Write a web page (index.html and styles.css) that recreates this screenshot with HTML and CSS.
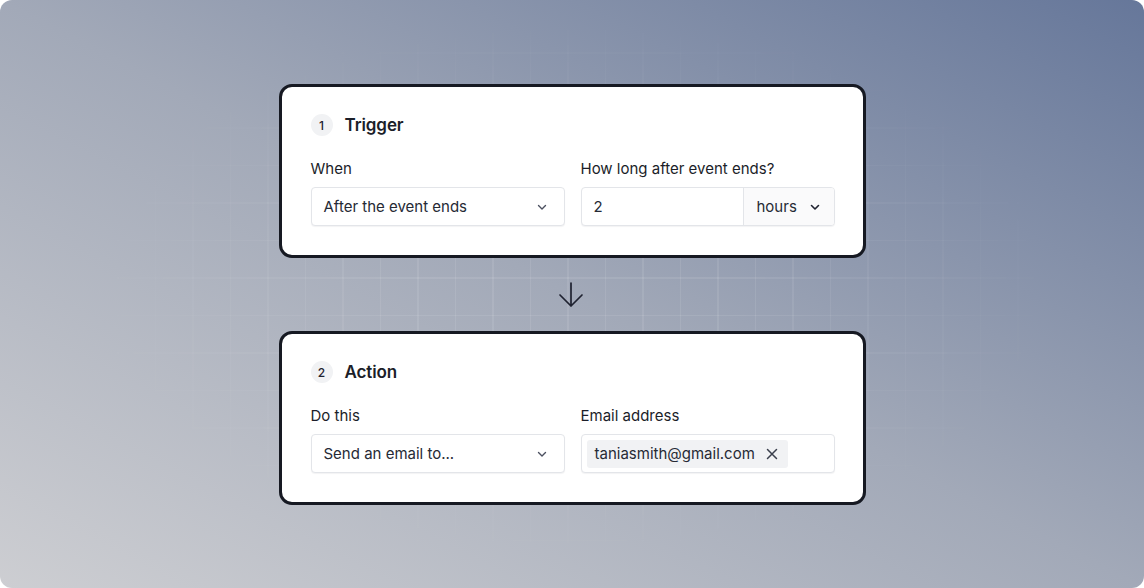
FILE: index.html
```html
<!DOCTYPE html>
<html>
<head>
<meta charset="utf-8">
<link rel="stylesheet" href="styles.css">
</head>
<body>
<div class="frame">
  <div class="grid"></div>
  <div class="flow">
    <section class="card">
      <div class="card-head"><span class="badge">1</span><h2 class="title">Trigger</h2></div>
      <div class="fields">
        <div class="field">
          <div class="label">When</div>
          <div class="control select">
            <span class="value">After the event ends</span>
            <svg class="chev" width="12" height="12" viewBox="0 0 12 12"><path d="M2.5 4.5L6 8l3.5-3.5" fill="none" stroke="#4b5060" stroke-width="1.4" stroke-linecap="round" stroke-linejoin="round"/></svg>
          </div>
        </div>
        <div class="field">
          <div class="label">How long after event ends?</div>
          <div class="control split">
            <span class="value num">2</span>
            <span class="unit">hours
              <svg class="chev" width="12" height="12" viewBox="0 0 12 12"><path d="M2.5 4.5L6 8l3.5-3.5" fill="none" stroke="#1f2230" stroke-width="1.6" stroke-linecap="round" stroke-linejoin="round"/></svg>
            </span>
          </div>
        </div>
      </div>
    </section>
    <div class="arrow">
      <svg width="28" height="26" viewBox="0 0 28 26"><path d="M14 1v23M3 13l11 11 11-11" fill="none" stroke="#1f2230" stroke-width="1.7" stroke-linecap="round" stroke-linejoin="round"/></svg>
    </div>
    <section class="card">
      <div class="card-head"><span class="badge">2</span><h2 class="title">Action</h2></div>
      <div class="fields">
        <div class="field">
          <div class="label">Do this</div>
          <div class="control select">
            <span class="value">Send an email to...</span>
            <svg class="chev" width="12" height="12" viewBox="0 0 12 12"><path d="M2.5 4.5L6 8l3.5-3.5" fill="none" stroke="#4b5060" stroke-width="1.4" stroke-linecap="round" stroke-linejoin="round"/></svg>
          </div>
        </div>
        <div class="field">
          <div class="label">Email address</div>
          <div class="control tags">
            <span class="chip">taniasmith@gmail.com
              <svg width="12" height="12" viewBox="0 0 12 12"><path d="M1.5 1.5l9 9M10.5 1.5l-9 9" fill="none" stroke="#3a3f4c" stroke-width="1.5" stroke-linecap="round"/></svg>
            </span>
          </div>
        </div>
      </div>
    </section>
  </div>
</div>
</body>
</html>
```
FILE: styles.css
```css
* { box-sizing: border-box; }
html, body { margin: 0; padding: 0; background: #ffffff; }
body { width: 1144px; height: 588px; overflow: hidden; font-family: Inter, "Noto Sans", sans-serif; }

.frame {
  position: relative;
  width: 1144px;
  height: 588px;
  border-radius: 12px;
  overflow: hidden;
  background: linear-gradient(to top right, #cdced2 0%, #a2a9b8 50%, #66779a 100%);
  display: flex;
  align-items: center;
  justify-content: center;
}

.grid {
  position: absolute;
  inset: 0;
  background-image:
    repeating-linear-gradient(to right, rgba(255,255,255,0.09) 0 1px, transparent 1px 37.5px),
    repeating-linear-gradient(to bottom, rgba(255,255,255,0.09) 0 1px, transparent 1px 37.5px);
  background-position: 5px 15px;
  -webkit-mask-image: radial-gradient(ellipse 500px 280px at 570px 290px, #000 35%, transparent 100%);
  mask-image: radial-gradient(ellipse 500px 280px at 570px 290px, #000 35%, transparent 100%);
}

.flow {
  position: relative;
  display: flex;
  flex-direction: column;
  align-items: center;
  margin-top: 1px;
}

.card {
  width: 587px;
  background: #ffffff;
  border: 3px solid #161922;
  border-radius: 13px;
  padding: 27px 28px 29px 29px;
}

.card-head {
  display: flex;
  align-items: center;
  height: 22px;
  margin-bottom: 23px;
}
.badge {
  width: 22px;
  height: 22px;
  border-radius: 50%;
  background: #f1f2f4;
  color: #1f2230;
  font-size: 12px;
  font-weight: 500;
  display: flex;
  align-items: center;
  justify-content: center;
  margin-right: 12px;
}
.title {
  margin: 0;
  font-size: 17px;
  font-weight: 600;
  color: #1b1e29;
  letter-spacing: -0.1px;
}

.fields {
  display: grid;
  grid-template-columns: 254px 254px;
  column-gap: 16px;
}
.label {
  font-size: 15px;
  line-height: 20px;
  color: #1b1e29;
  margin-bottom: 8px;
}
.control {
  height: 39px;
  border: 1px solid #e3e5e9;
  border-radius: 4px;
  box-shadow: 0 1px 1px rgba(16,24,40,0.05);
  display: flex;
  align-items: center;
  font-size: 15px;
  color: #262a35;
  background: #fff;
}
.select {
  padding: 0 16px 0 12px;
  justify-content: space-between;
}
.split { overflow: hidden; }
.split .num {
  flex: 1;
  padding-left: 12px;
}
.unit {
  height: 100%;
  width: 91px;
  border-left: 1px solid #e3e5e9;
  background: #fafafb;
  display: flex;
  align-items: center;
  gap: 12px;
  padding-left: 13px;
}
.tags { padding-left: 5px; }
.chip {
  height: 28px;
  background: #f1f2f4;
  border-radius: 3px;
  padding: 0 10px 0 8px;
  display: flex;
  align-items: center;
  gap: 11px;
  color: #262a35;
}

.arrow {
  height: 73px;
  display: flex;
  align-items: center;
  justify-content: center;
  margin-left: -2px;
}
.arrow svg { display: block; }
```
